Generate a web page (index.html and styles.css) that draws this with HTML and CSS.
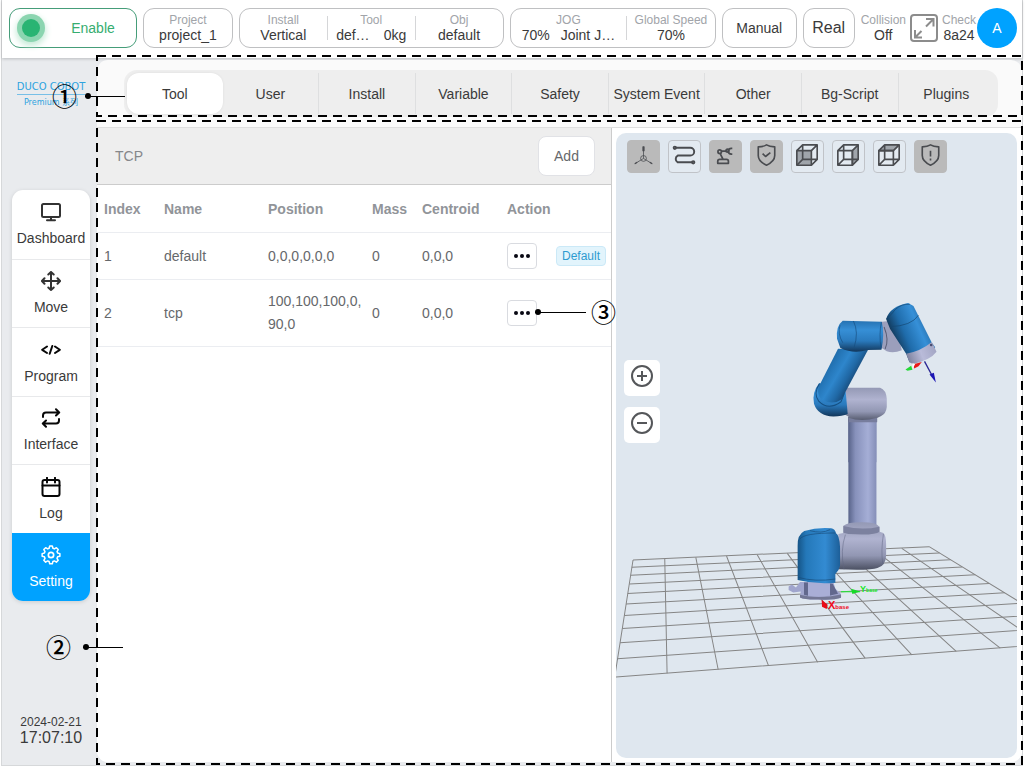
FILE: index.html
```html
<!DOCTYPE html>
<html lang="en">
<head>
<meta charset="utf-8">
<title>Duco Cobot - Setting</title>
<link rel="stylesheet" href="styles.css">
</head>
<body>
<div class="app">
  <header class="topbar">
    <button class="pill enable" type="button"><span class="lamp"></span><span class="enable-text">Enable</span></button>
    <div class="pill project"><div class="stat"><span class="key">Project</span><span class="val">project_1</span></div></div>
    <div class="pill setup">
      <div class="stat"><span class="key">Install</span><span class="val">Vertical</span></div>
      <div class="stat"><span class="key">Tool</span><span class="val pair"><span>def…</span><span>0kg</span></span></div>
      <div class="stat"><span class="key">Obj</span><span class="val">default</span></div>
    </div>
    <div class="pill motion">
      <div class="stat jog"><span class="key">JOG</span><span class="val jog-pair"><span>70%</span><span>Joint J…</span></span></div>
      <div class="stat"><span class="key">Global Speed</span><span class="val">70%</span></div>
    </div>
    <button class="pill manual" type="button">Manual</button>
    <button class="pill real" type="button">Real</button>
    <div class="status">
      <div class="stat"><span class="key">Collision</span><span class="val">Off</span></div>
      <button class="expand" type="button" aria-label="Full screen">
        <svg width="28" height="28" viewBox="0 0 28 28" fill="none" stroke="#8c8c8c" stroke-width="2"><rect x="1" y="1" width="26" height="26" rx="3"/><path d="M16 5h7.500v7.500M23 5.500l-7 7M5 16v7.500h7M5.500 23l6-6"/></svg>
      </button>
      <div class="stat"><span class="key">Check</span><span class="val">8a24</span></div>
      <button class="avatar" type="button">A</button>
    </div>
  </header>

  <div class="body">
    <aside class="side">
      <div class="logo"><span class="brand">DUCO COBOT</span><span class="series">Premium 系列</span></div>
      <nav class="menu">
        <a href="#dashboard"><svg viewBox="0 0 20 20"><rect x="1" y="2" width="18" height="13" rx="1.500"/><path d="M10 15v3M6 18.200h8"/></svg>Dashboard</a>
        <a href="#move"><svg viewBox="0 0 20 20"><path d="M10 1v18M1 10h18M7.300 3.500L10 .9l2.700 2.600M7.300 16.500l2.700 2.600 2.700-2.600M3.500 7.300L.9 10l2.600 2.700M16.500 7.300l2.600 2.700-2.600 2.700"/></svg>Move</a>
        <a href="#program"><svg viewBox="0 0 20 20" class="dark"><path d="M6 6.500L1.200 9.800 6 13M14 6.500l4.800 3.300L14 13M11.300 6L8.700 13.800"/></svg>Program</a>
        <a href="#interface"><svg viewBox="0 0 20 20" class="dark"><path d="M2 9V7.500q0-3 3-3h13M15 1.300l3.200 3.200L15 7.500M18 11v1.500q0 3-3 3H2M5 12.500l-3.200 3L5 18.700"/></svg>Interface</a>
        <a href="#log"><svg viewBox="0 0 20 20" class="dark"><rect x="1.500" y="3" width="17" height="16" rx="2"/><path d="M1.500 8.500h17M6 .8v4.700M14 .8v4.700"/></svg>Log</a>
        <a href="#setting" class="current"><svg viewBox="0 0 24 24"><circle cx="12" cy="12" r="3.200"/><path d="M10.300 1.800h3.400l.8 3 1.900.8 2.700-1.600 2.400 2.400-1.600 2.700.8 1.900 3 .8v3.400l-3 .8-.8 1.900 1.600 2.700-2.400 2.400-2.700-1.600-1.900.8-.8 3h-3.400l-.8-3-1.900-.8-2.700 1.600-2.400-2.400 1.600-2.700-.8-1.900-3-.8v-3.400l3-.8.8-1.900-1.600-2.700 2.400-2.400 2.700 1.600 1.900-.8z" transform="translate(1.100 -.4) scale(.91)"/></svg>Setting</a>
      </nav>
      <div class="clock"><span class="date">2024-02-21</span><span class="time">17:07:10</span></div>
    </aside>

    <main class="panel">
      <div class="tabs-area">
        <nav class="tabs">
          <button type="button" class="on">Tool</button><button type="button">User</button><button type="button">Install</button><button type="button">Variable</button><button type="button">Safety</button><button type="button">System Event</button><button type="button">Other</button><button type="button">Bg-Script</button><button type="button">Plugins</button>
        </nav>
      </div>
      <div class="content">
        <section class="list">
          <div class="list-head"><h1>TCP</h1><button type="button" class="add">Add</button></div>
          <table>
            <colgroup><col class="c-index"><col class="c-wide"><col class="c-wide"><col class="c-mass"><col class="c-cent"><col></colgroup>
            <thead><tr><th>Index</th><th>Name</th><th>Position</th><th>Mass</th><th>Centroid</th><th>Action</th></tr></thead>
            <tbody>
              <tr><td>1</td><td>default</td><td>0,0,0,0,0,0</td><td>0</td><td>0,0,0</td><td><div class="actions"><button type="button" class="more" aria-label="More actions"><i></i><i></i><i></i></button><span class="tag">Default</span></div></td></tr>
              <tr><td>2</td><td>tcp</td><td>100,100,100,0,<wbr>90,0</td><td>0</td><td>0,0,0</td><td><div class="actions"><button type="button" class="more" aria-label="More actions"><i></i><i></i><i></i></button></div></td></tr>
            </tbody>
          </table>
        </section>

        <section class="viewer">
          <svg class="scene" viewBox="616 133 401 624" preserveAspectRatio="xMidYMid slice">
            <defs>
              <linearGradient id="post"><stop offset="0" stop-color="#59648a"/><stop offset=".25" stop-color="#8791bb"/><stop offset=".7" stop-color="#a5aed6"/><stop offset="1" stop-color="#858fb8"/></linearGradient>
              <linearGradient id="joint" x2="0" y2="1"><stop offset="0" stop-color="#9499b5"/><stop offset=".35" stop-color="#b0b3d0"/><stop offset=".7" stop-color="#9297b3"/><stop offset="1" stop-color="#4b5062"/></linearGradient>
              <linearGradient id="blueH"><stop offset="0" stop-color="#155486"/><stop offset=".2" stop-color="#2478b9"/><stop offset=".65" stop-color="#338bd2"/><stop offset="1" stop-color="#1d5f99"/></linearGradient>
              <linearGradient id="blueV" x2="0" y2="1"><stop offset="0" stop-color="#2672b2"/><stop offset=".3" stop-color="#368fd6"/><stop offset=".65" stop-color="#2a7abd"/><stop offset="1" stop-color="#12365a"/></linearGradient>
              <linearGradient id="arm" gradientUnits="userSpaceOnUse" x1="140" y1="230" x2="225" y2="280"><stop offset="0" stop-color="#1f6cab"/><stop offset=".4" stop-color="#2e86cc"/><stop offset=".7" stop-color="#2068a5"/><stop offset="1" stop-color="#163f68"/></linearGradient>
              <linearGradient id="head" gradientUnits="userSpaceOnUse" x1="335" y1="140" x2="440" y2="95"><stop offset="0" stop-color="#113554"/><stop offset=".35" stop-color="#1f6cab"/><stop offset=".75" stop-color="#3690d8"/><stop offset="1" stop-color="#276fab"/></linearGradient>
              <linearGradient id="cuff" gradientUnits="userSpaceOnUse" x1="380" y1="205" x2="465" y2="170"><stop offset="0" stop-color="#7b7f9b"/><stop offset=".5" stop-color="#b9bbd9"/><stop offset="1" stop-color="#a2a5c3"/></linearGradient>
            </defs>
            <g transform="translate(610 520) scale(.33333)" fill="none" stroke="#858585" stroke-width="3">
              <path d="M70 118L15 469M165 115L172 457M258 110L325 446M350 106L476 435M442 102L623 424M532 98L765 412M620 94L905 402M707 90L1038 392M792 87L1170 382M875 83L1298 372M957 78L1422 362"/>
              <path d="M70 118L957 78M66 140L988 97M63 164L1021 117M59 190L1056 139M54 218L1095 162M49 250L1137 188M44 284L1183 216M38 323L1234 247M31 366L1290 282M23 414L1353 320M15 469L1422 362"/>
            </g>
            <g transform="translate(770 450) scale(.33333)">
              <path d="M235-100H319V230H235z" fill="url(#post)"/>
              <path d="M205 250L220 247V225Q235 214 277 215Q318 215 328 228V243L340 247Q348 255 348 280V315Q347 345 322 352Q300 360 205 356z" fill="url(#joint)"/>
              <path d="M220 226Q275 240 328 228V243Q315 255 235 250L220 246z" fill="#7c819f"/>
              <path d="M226 252Q210 300 222 356M340 250Q332 300 338 340" fill="none" stroke="#5f6480" stroke-width="1.500"/>
              <path d="M56 407L66 401 78 410 90 394H190L196 414 213 430V441Q190 449 145 446Q105 447 90 440L92 422 70 425 56 418z" fill="#a0a5cd"/>
              <path d="M90 432Q145 446 213 431V441Q190 449 145 446Q105 447 90 440z" fill="#737795"/>
              <path d="M102 395h12v40l-12-3zM180 398l8 1 16 30-24 5z" fill="#62688d"/>
              <path d="M114 392h66v42q-33 6-66 0z" fill="#a9aed6"/>
              <path d="M83 285Q82 252 103 241Q140 230 183 233Q195 234 198 248Q208 252 210 290V345Q207 360 196 370V396Q140 402 83 388z" fill="url(#blueH)"/>
              <path d="M90 265Q102 247 196 247M84 380Q135 394 196 385M120 240Q155 250 180 237" fill="none" stroke="#174c7a" stroke-width="2"/>
              <path d="M213 423H270" stroke="#16ed28" stroke-width="3"/><path d="M243 414L271 422 247 430z" fill="#16d928"/>
              <path d="M155 447L173 462 170 475 156 468z" fill="#e80b17"/>
            </g>
            <g font-family="Liberation Sans" font-weight="bold"><text x="828" y="608" font-size="11" fill="#f00b1b">X<tspan font-size="6">base</tspan></text><text x="860" y="591" font-size="9" fill="#13e723">Y<tspan font-size="5">base</tspan></text></g>
            <g transform="translate(780 290) scale(.33333)">
              <path d="M205 380H289V515H205z" fill="url(#post)"/>
              <path d="M195 292H300Q318 298 320 325V350Q318 370 303 377L291 383V394H205V378L190 370z" fill="url(#joint)"/>
              <path d="M205 382Q245 396 291 382V395H205z" fill="#777d9d"/>
              <path d="M300 95L345 90 365 180Q340 190 320 183L300 170z" fill="#9b9fbc"/>
              <path d="M312 110Q328 150 315 176" fill="none" stroke="#585d75" stroke-width="3"/>
              <path d="M118 278Q95 306 102 340Q114 377 160 378Q187 378 203 371L197 305z" fill="url(#blueV)"/>
              <path d="M174 175L118 285Q108 310 125 327Q157 346 184 327L264 178z" fill="url(#arm)"/>
              <path d="M118 280Q99 310 116 332Q145 362 183 334L193 309" fill="none" stroke="#155083" stroke-width="3"/>
              <path d="M171 145Q167 107 188 91L305 94Q314 130 304 178L262 179Q220 192 181 173z" fill="url(#blueV)"/>
              <path d="M220 92Q237 125 222 172M304 96Q296 130 303 175M180 105Q172 130 188 157" fill="none" stroke="#174d7e" stroke-width="2"/>
              <path d="M318 86Q330 48 384 38L400 47 455 157 465 171Q451 204 388 216L378 190 330 116z" fill="url(#head)"/>
              <path d="M378 190Q421 183 455 155L469 184Q452 208 398 221L388 216z" fill="url(#cuff)"/>
              <path d="M319 85Q338 70 345 58M345 58Q365 40 389 42M331 109Q393 107 415 75" fill="none" stroke="#14466f" stroke-width="2"/>
              <circle cx="453" cy="164" r="4" fill="#4a4e70"/>
              <path d="M433 213L458 260" stroke="#2b2894" stroke-width="4"/><path d="M448 252L461 247 467 276z" fill="#1c16b4"/>
              <path d="M400 222L425 215 415 228 402 234z" fill="#e81a1a"/><path d="M376 237L393 226 397 238 382 241z" fill="#25d938"/><path d="M397 218l8 4-8 12z" fill="#fff"/>
            </g>
          </svg>
          <div class="tools">
            <button type="button" class="active" aria-label="Axes"><svg viewBox="0 0 32 32" stroke-width=".8"><path d="M16 6v12M16 18L7 23.500M16 18l9 5.500"/><circle cx="16" cy="18" r="3"/><path d="M15.500 10V6h1v4zM7 23.500l2.500-1.500M25 23.500L22.500 22" stroke-width="1.300"/></svg></button>
            <button type="button" aria-label="Trajectory"><svg viewBox="0 0 32 32" stroke-width="2"><path d="M6 7h16a4 4 0 0 1 0 8H9a4 4 0 0 0 0 7h16"/><circle cx="6" cy="7" r="1.200"/><circle cx="25" cy="22" r="1.200"/></svg></button>
            <button type="button" class="active" aria-label="Robot"><svg viewBox="0 0 32 32" stroke-width="1.800"><circle cx="10" cy="11" r="1.800"/><path d="M12 10.500h6M10.500 13l3 6M8 23v-2q0-2 2-2h7q2 0 2 2v2zM23 7.500h-1q-3 0-3 3t3 3h1"/><circle cx="18" cy="10" r="1.500"/></svg></button>
            <button type="button" class="active" aria-label="Safety"><svg viewBox="0 0 32 32" stroke-width="1.700"><path d="M16 4q3 2 8.500 2V15q0 6-8.500 10Q7.500 21 7.500 15V6Q13 6 16 4zM12 13l3 3 5-4"/></svg></button>
            <button type="button" aria-label="Front view"><svg viewBox="0 0 32 32" stroke-width="1.700"><path d="M5 10h15v15H5z" fill="#a0a5ab"/><path d="M5 10l6-6h15l-6 6M26 4v15l-6 6M11 4v15M11 19h15M11 19l-6 6"/></svg></button>
            <button type="button" aria-label="Side view"><svg viewBox="0 0 32 32" stroke-width="1.700"><path d="M20 10l6-6v15l-6 6z" fill="#a0a5ab"/><path d="M5 10h15v15H5zM5 10l6-6h15M11 4v15M11 19h15M11 19l-6 6"/></svg></button>
            <button type="button" aria-label="Top view"><svg viewBox="0 0 32 32" stroke-width="1.700"><path d="M5 10l6-6h15l-6 6z" fill="#a0a5ab"/><path d="M5 10h15v15H5zM26 4v15l-6 6M11 4v15M11 19h15M11 19l-6 6"/></svg></button>
            <button type="button" class="active" aria-label="Warnings"><svg viewBox="0 0 32 32" stroke-width="1.700"><path d="M16 4q3 2 8.500 2V15q0 6-8.500 10Q7.500 21 7.500 15V6Q13 6 16 4zM16 10v6M16 18v2"/></svg></button>
          </div>
          <div class="zoomers">
            <button type="button" aria-label="Zoom in"><svg viewBox="0 0 24 24"><circle cx="12" cy="12" r="10"/><path d="M12 7v10M7 12h10"/></svg></button>
            <button type="button" aria-label="Zoom out"><svg viewBox="0 0 24 24"><circle cx="12" cy="12" r="10"/><path d="M7 12h10"/></svg></button>
          </div>
        </section>
      </div>
    </main>
  </div>

  <svg class="frame frame-tabs"><rect width="100%" height="100%"/></svg>
  <svg class="frame frame-content"><rect width="100%" height="100%"/></svg>
  <div class="callout one"><span class="num">①</span><span class="lead"></span></div>
  <div class="callout two"><span class="num">②</span><span class="lead"></span></div>
  <div class="callout three"><span class="lead"></span><span class="num">③</span></div>
</div>
</body>
</html>
```
FILE: styles.css
```css
* { box-sizing: border-box; }
body { margin: 0; background: #fff; color: #3a3a3a; font: 14px/16px "Liberation Sans", "Noto Sans CJK SC", sans-serif; }
button { font: inherit; color: inherit; padding: 0; margin: 0; border: 0; background: none; cursor: pointer; }
a { color: inherit; text-decoration: none; }

.app { position: relative; display: flex; flex-direction: column; min-height: 100vh; margin: 0 3px 0 1px; border: 1px solid #d6d8da; border-top: 0; background: #e9ebee; }

.topbar { display: flex; gap: 6px; padding: 8px 5px 10px 7px; background: #fff; box-shadow: 0 1px 3px #0003; }
.pill { display: flex; align-items: center; justify-content: center; height: 40px; border: 1px solid #bfc0c2; border-radius: 11px; background: #fff; }
.enable { flex: 129 1 0; justify-content: flex-start; border-color: #459d79; color: #36ad70; }
.lamp { width: 18px; height: 18px; margin-left: 12px; border-radius: 50%; background: #29b473; box-shadow: 0 0 0 5px #8bd5b0, 0 3px 6px 6px #c6ebd8; }
.enable-text { flex: 1; text-align: center; padding-left: 10px; }
.project { flex: 90 1 0; }
.setup { flex: 269 1 0; }
.motion { flex: 209 1 0; }
.manual { flex: 75 1 0; }
.real { flex: 51 1 0; font-size: 16px; }
.stat { display: flex; flex-direction: column; align-items: center; white-space: nowrap; }
.setup .stat, .motion .stat { flex: 89 1 0; }
.motion .jog { flex: 118 1 0; }
.setup .stat + .stat, .motion .stat + .stat { border-left: 1px solid #d5d6d8; height: 24px; justify-content: center; }
.key { color: #a1a4a9; font-size: 12px; line-height: 14px; }
.val { line-height: 16px; }
.pair { display: flex; gap: 14px; }
.jog-pair { display: flex; gap: 11px; }
.status { display: flex; align-items: center; gap: 4px; }
.expand { display: flex; }
.avatar { width: 40px; height: 40px; margin-left: -3px; border-radius: 50%; background: #00a2ff; color: #fff; }

.body { flex: 1; display: flex; }
.side { width: 95px; display: flex; flex-direction: column; align-items: center; padding: 22px 7px 19px 10px; }
.logo { display: flex; flex-direction: column; align-items: center; color: #2da3df; }
.brand { padding-bottom: 1px; border-bottom: 1px solid #77bfe7; font: 10px/13px "DejaVu Sans", sans-serif; white-space: nowrap; }
.series { font: 8px/15px "DejaVu Sans", "Noto Sans CJK SC", sans-serif; }
.menu { display: grid; grid-template-rows: repeat(6, 1fr); width: 78px; height: 411px; margin-top: 80px; border-radius: 11px; overflow: hidden; background: #fff; box-shadow: 0 1px 4px #0002; }
.menu a { display: flex; flex-direction: column; align-items: center; justify-content: center; gap: 8px; border-top: 1px solid #e8e9eb; }
.menu a:first-child { border-top: 0; }
.menu svg { width: 20px; height: 20px; fill: none; stroke: #333; stroke-width: 2; stroke-linecap: round; stroke-linejoin: round; }
.menu .dark { stroke: #080808; }
.menu .current { background: #00a2ff; color: #fff; border-color: #00a2ff; }
.menu .current svg { stroke: #fff; }
.clock { display: flex; flex-direction: column; align-items: center; margin-top: auto; }
.date { font-size: 12px; line-height: 14px; }
.time { font-size: 16px; line-height: 17px; }

.panel { flex: 1; min-width: 0; display: flex; flex-direction: column; margin: 2px 0 3px; border-radius: 11px; overflow: hidden; background: #fafafa; }
.tabs-area { padding: 10px 24px 11px 27px; }
.tabs { display: flex; padding: 3px 4px 3px 3px; border-radius: 13px; background: #eee; }
.tabs button { flex: 1 1 0; height: 41px; border-left: 1px solid #dedfe0; white-space: nowrap; }
.tabs .on { border-left: 0; border-radius: 12px; background: #fff; box-shadow: 0 0 3px #0001; }
.tabs .on + button { border-left: 0; }

.content { flex: 1; display: flex; margin-top: -1px; border-top: 1px solid #dfdfdf; background: #fff; }
.list { flex: 514 1 0; border-right: 1px solid #ccc; }
.list-head { display: flex; align-items: center; justify-content: space-between; height: 57px; padding: 0 16px 0 18px; border-bottom: 1px solid #ccc; background: #eee; color: #85878a; }
.list-head h1 { margin: 0; font-size: 14px; font-weight: normal; }
.add { width: 57px; height: 40px; border: 1px solid #e1e2e6; border-radius: 8px; background: #fff; color: #66686b; }
table { width: 100%; border-collapse: collapse; table-layout: fixed; color: #66686b; line-height: 23px; }
.c-index { width: 61px; } .c-wide { width: 104px; } .c-mass { width: 50px; } .c-cent { width: 85px; }
th, td { padding: 10px 3px 10px 6px; text-align: left; border-bottom: 1px solid #ebedf1; white-space: nowrap; }
th { padding-top: 13px; padding-bottom: 11px; color: #919499; }
th:first-child, td:first-child { padding-left: 7px; }
td:nth-child(3) { white-space: normal; }
td:last-child { padding-right: 5px; }
.actions { display: flex; align-items: center; justify-content: space-between; height: 26px; }
.more { display: flex; align-items: center; justify-content: center; gap: 2px; width: 30px; height: 26px; border: 1px solid #d9dbe0; border-radius: 4px; background: #fff; }
.more i { width: 4px; height: 4px; border-radius: 50%; background: #080812; }
.tag { padding: 0 5px; border: 1px solid #cbe9f7; border-radius: 4px; background: #e2f4fc; color: #2d9bd0; font-size: 12px; line-height: 18px; }

.viewer { position: relative; flex: 401 1 0; margin: 5px 5px 4px 4px; border-radius: 10px; overflow: hidden; background: #dfe7ef; }
.scene { position: absolute; inset: 0; width: 100%; height: 100%; }
.tools { position: relative; display: flex; gap: 8px; padding: 7px 11px; }
.tools button { width: 33px; height: 33px; border: 1px solid #c0c3c8; border-radius: 4px; background: #e3eaf1; }
.tools .active { background: #bababa; border-color: #bababa; }
.tools svg { display: block; width: 31px; height: 31px; fill: none; stroke: #4a4c50; stroke-linejoin: round; }
.zoomers { position: relative; display: flex; flex-direction: column; gap: 11px; width: 36px; margin: 180px 0 0 8px; }
.zoomers button { display: flex; align-items: center; justify-content: center; height: 36px; padding-bottom: 5px; border-radius: 5px; background: #fff; }
.zoomers svg { width: 24px; height: 24px; fill: none; stroke: #55575a; stroke-width: 2; }

.frame { position: absolute; overflow: visible; pointer-events: none; }
.frame rect { fill: none; stroke: #000; stroke-width: 2; stroke-dasharray: 9 6; }
.frame-tabs { left: 95px; top: 56px; width: calc(100% - 95px); height: 60px; }
.frame-content { left: 95px; top: 121px; width: calc(100% - 95px); height: calc(100% - 122px); }
.callout { position: absolute; display: flex; align-items: center; height: 26px; color: #000; pointer-events: none; }
.num { width: 25px; text-align: center; font: 500 25px/24px "Noto Sans CJK JP", sans-serif; padding-bottom: 2px; }
.lead { display: flex; align-items: center; width: 40px; height: 1px; background: #000; }
.lead::before { content: ""; width: 6px; height: 6px; border-radius: 50%; background: #000; }
.one { left: 50px; top: 83px; gap: 8px; }
.two { left: 44px; top: 634px; gap: 12px; }
.three { left: 533px; top: 299px; gap: 5px; }
.three .lead { width: 51px; }
```
